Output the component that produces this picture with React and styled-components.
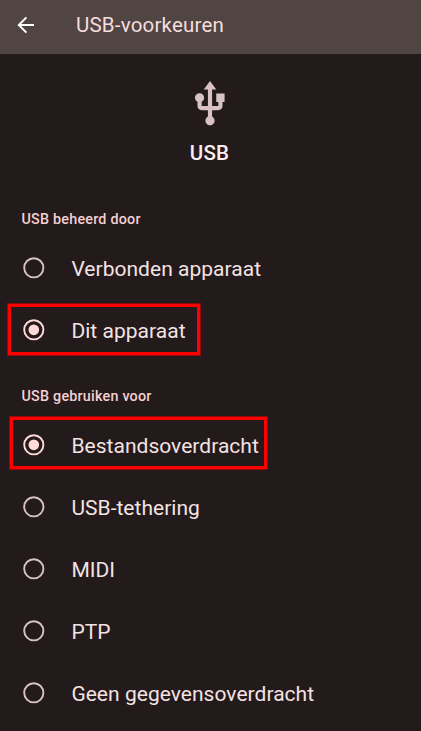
import React from "react";
import styled, { createGlobalStyle } from "styled-components";

const GlobalStyle = createGlobalStyle`
  * { box-sizing: border-box; }
  body { margin: 0; background: #231a1b; overflow: hidden; }
`;

const Screen = styled.main`
  width: 421px;
  height: 731px;
  overflow: hidden;
  background: #231a1b;
  color: #f5dddd;
  font-family: Roboto, sans-serif;
`;

const AppBar = styled.header`
  display: flex;
  align-items: center;
  height: 54px;
  padding: 0 0 4px 15px;
  background: #514544;
`;

const BackButton = styled.button`
  display: flex;
  width: 22px;
  height: 22px;
  padding: 0;
  border: 0;
  background: none;
  color: #fff;
`;

const Title = styled.h1`
  margin: 0 0 0 39px;
  font-size: 20.5px;
  line-height: 24px;
  font-weight: 400;
  letter-spacing: 0.2px;
`;

const Hero = styled.section`
  display: flex;
  flex-direction: column;
  align-items: center;
  height: 147px;
  padding: 25px 2px 0 0;
`;

const HeroName = styled.h2`
  margin: 11px 0 0;
  font-size: 20.5px;
  line-height: 26px;
  font-weight: 500;
  letter-spacing: 0.2px;
  color: #fceeee;
`;

const Section = styled.section`
  height: 177px;
`;

const SectionTitle = styled.h3`
  height: 35.8px;
  margin: 0;
  padding: 8px 0 0 21.5px;
  font-size: 14.3px;
  line-height: 20px;
  font-weight: 500;
  letter-spacing: 0.24px;
  color: #f5d0d0;
`;

const Option = styled.label`
  position: relative;
  display: flex;
  align-items: center;
  height: 61.9px;
  padding-left: 21.2px;
  color: ${(p) => (p.$checked ? "#ffdad9" : "#d8c2c1")};
`;

const OptionText = styled.span`
  margin: 2.8px 0 0 24.6px;
  font-size: 21px;
  line-height: 26px;
  letter-spacing: 0.03px;
  white-space: nowrap;
  color: #f5e2e2;
`;

const Highlight = styled.span`
  position: absolute;
  left: ${(p) => p.$box.left}px;
  top: ${(p) => p.$box.top}px;
  width: ${(p) => p.$box.width}px;
  height: ${(p) => p.$box.height}px;
  border: 3px solid #f00;
  box-shadow: 0 0 0 1px #8f0a0b;
`;

const RadioSvg = styled.svg`
  flex: none;
  width: 25.6px;
  height: 25.6px;
`;

function Radio({ checked }) {
  return (
    <RadioSvg viewBox="0 0 24 24">
      <circle cx="12" cy="12" r="9" fill="none" stroke="currentColor" strokeWidth="1.8" />
      {checked && <circle cx="12" cy="12" r="5" fill="currentColor" />}
    </RadioSvg>
  );
}

const sections = [
  {
    title: "USB beheerd door",
    options: [
      { label: "Verbonden apparaat" },
      { label: "Dit apparaat", checked: true, box: { left: 8, top: 5.3, width: 192, height: 51 } },
    ],
  },
  {
    title: "USB gebruiken voor",
    options: [
      { label: "Bestandsoverdracht", checked: true, box: { left: 10, top: 3.2, width: 257, height: 52 } },
      { label: "USB-tethering" },
      { label: "MIDI" },
      { label: "PTP" },
      { label: "Geen gegevensoverdracht" },
    ],
  },
];

export default function App() {
  return (
    <Screen>
      <GlobalStyle />
      <AppBar>
        <BackButton aria-label="Terug">
          <svg width="22" height="22" viewBox="0 0 22 22" fill="none" stroke="currentColor" strokeWidth="2">
            <path d="M19 11H4M11.4 3.4 3.8 11l7.6 7.6" />
          </svg>
        </BackButton>
        <Title>USB-voorkeuren</Title>
      </AppBar>
      <Hero>
        <svg width="50" height="50" viewBox="0 0 24 24" fill="#d8c2c3">
          <path d="M15 7v4h1v2h-3V5h2l-3-4-3 4h2v8H8v-2.07c.7-.37 1.2-1.08 1.2-1.93 0-1.21-.99-2.2-2.2-2.2-1.21 0-2.2.99-2.2 2.2 0 .85.5 1.56 1.2 1.93V13c0 1.11.89 2 2 2h3v3.05c-.71.37-1.2 1.1-1.2 1.95 0 1.22.99 2.2 2.2 2.2 1.21 0 2.2-.98 2.2-2.2 0-.85-.49-1.58-1.2-1.95V15h3c1.11 0 2-.89 2-2v-2h1V7h-4z" />
        </svg>
        <HeroName>USB</HeroName>
      </Hero>
      {sections.map((s) => (
        <Section key={s.title}>
          <SectionTitle>{s.title}</SectionTitle>
          {s.options.map((o) => (
            <Option key={o.label} $checked={o.checked}>
              <Radio checked={o.checked} />
              <OptionText>{o.label}</OptionText>
              {o.box && <Highlight $box={o.box} />}
            </Option>
          ))}
        </Section>
      ))}
    </Screen>
  );
}
